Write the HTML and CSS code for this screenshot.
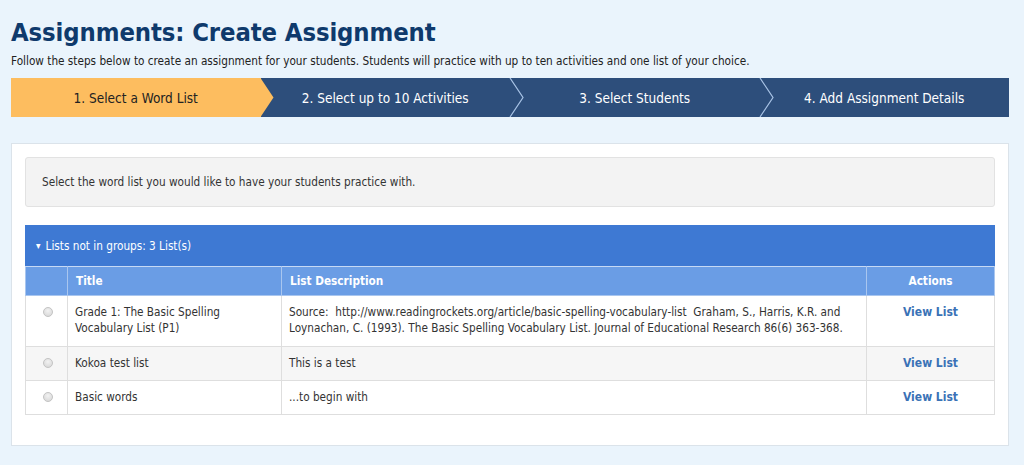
FILE: index.html
```html
<!DOCTYPE html>
<html>
<head>
<meta charset="utf-8">
<link rel="stylesheet" href="styles.css">
</head>
<body>
<div class="page">
  <h1 class="title">Assignments: Create Assignment</h1>
  <p class="intro">Follow the steps below to create an assignment for your students. Students will practice with up to ten activities and one list of your choice.</p>
  <div class="steps">
    <div class="step active">1. Select a Word List</div>
    <div class="step sep">2. Select up to 10 Activities
      <svg class="chev" viewBox="0 0 16 40" preserveAspectRatio="none"><polyline points="1,0 14,20 1,40" fill="none" stroke="#a9c4e6" stroke-width="1.2"/></svg>
    </div>
    <div class="step sep">3. Select Students
      <svg class="chev" viewBox="0 0 16 40" preserveAspectRatio="none"><polyline points="1,0 14,20 1,40" fill="none" stroke="#a9c4e6" stroke-width="1.2"/></svg>
    </div>
    <div class="step">4. Add Assignment Details</div>
  </div>
  <div class="panel">
    <div class="notice">Select the word list you would like to have your students practice with.</div>
    <div class="group-head"><span class="caret">&#9662;</span>Lists not in groups: 3 List(s)</div>
    <table class="lists">
      <colgroup>
        <col class="c-radio"><col class="c-title"><col class="c-desc"><col class="c-act">
      </colgroup>
      <thead>
        <tr><th></th><th>Title</th><th>List Description</th><th class="act">Actions</th></tr>
      </thead>
      <tbody>
        <tr class="first">
          <td class="rad"><span class="radio"></span></td>
          <td>Grade 1: The Basic Spelling Vocabulary List (P1)</td>
          <td>Source:&nbsp; http://www.readingrockets.org/article/basic-spelling-vocabulary-list&nbsp; Graham, S., Harris, K.R. and Loynachan, C. (1993). The Basic Spelling Vocabulary List. Journal of Educational Research 86(6) 363-368.</td>
          <td class="act"><a class="view">View List</a></td>
        </tr>
        <tr class="alt">
          <td class="rad"><span class="radio"></span></td>
          <td>Kokoa test list</td>
          <td>This is a test</td>
          <td class="act"><a class="view">View List</a></td>
        </tr>
        <tr>
          <td class="rad"><span class="radio"></span></td>
          <td>Basic words</td>
          <td>...to begin with</td>
          <td class="act"><a class="view">View List</a></td>
        </tr>
      </tbody>
    </table>
  </div>
</div>
</body>
</html>
```

FILE: styles.css
```css
html, body {
  margin: 0;
  padding: 0;
  background: #eaf4fc;
  height: 100%;
}
body {
  font-family: "DejaVu Sans Condensed", "DejaVu Sans", sans-serif;
  color: #333;
  font-size: 11.7px;
}
.page {
  width: 998px;
  padding: 15px 0 0 11px;
}
.title {
  margin: 0;
  font-size: 25.4px;
  line-height: 34px;
  font-weight: bold;
  color: #0f3a6c;
  letter-spacing: -0.1px;
}
.intro {
  margin: 4px 0 0;
  font-size: 11.7px;
  line-height: 16px;
  color: #222;
}
.steps {
  display: flex;
  margin-top: 9px;
  height: 39px;
  background: #2d4e7b;
}
.step {
  flex: 1;
  position: relative;
  display: flex;
  align-items: center;
  justify-content: center;
  color: #fff;
  font-size: 13.5px;
}
.step.active {
  background: #fdbd5f;
  color: #222;
}
.step.active::after {
  content: "";
  position: absolute;
  right: -13px;
  top: 0;
  width: 13px;
  height: 100%;
  background: #fdbd5f;
  clip-path: polygon(0 0, 100% 50%, 0 100%);
  z-index: 1;
}
.chev {
  position: absolute;
  right: -15px;
  top: 0;
  width: 16px;
  height: 100%;
  z-index: 1;
}
.panel {
  margin-top: 26px;
  background: #fff;
  border: 1px solid #dbe3ea;
  padding: 13px 13px 30px;
}
.notice {
  background: #f3f3f3;
  border: 1px solid #e2e2e2;
  border-radius: 3px;
  height: 48px;
  display: flex;
  align-items: center;
  padding-left: 16px;
  color: #333;
}
.group-head {
  margin-top: 18px;
  background: #3e79d3;
  color: #fff;
  height: 41px;
  display: flex;
  align-items: center;
  padding-left: 11px;
}
.caret {
  font-size: 10px;
  margin-right: 5px;
}
.lists {
  width: 969px;
  border-collapse: collapse;
  table-layout: fixed;
}
.c-radio { width: 42px; }
.c-title { width: 214px; }
.c-desc { width: 585px; }
.c-act { width: 128px; }
.lists th {
  background: #6a9de5;
  color: #fff;
  font-weight: bold;
  text-align: left;
  height: 28px;
  padding: 0 8px;
  border: 1px solid #a9c6ef;
  border-top: 1px solid #c6d9f5;
}
.lists th.act { text-align: center; }
.lists td {
  border: 1px solid #dedede;
  padding: 8px 7px 9px 7px;
  vertical-align: top;
  line-height: 16px;
  height: 16px;
  color: #333;
}
.lists tr.first td { padding-bottom: 10px; }
.lists tr.alt td { background: #f6f6f6; }
.lists td.rad { text-align: center; padding-left: 2px; padding-right: 0; }
.lists td.act { text-align: center; }
.radio {
  display: block;
  margin: 3px auto 0;
  width: 10px;
  height: 10px;
  box-sizing: border-box;
  border-radius: 50%;
  border: 1px solid #c4c4c4;
  background: radial-gradient(circle at 50% 35%, #f2f2f2, #d4d4d4);
}
.view {
  color: #3a72b6;
  font-weight: bold;
  font-size: 12px;
}
```
